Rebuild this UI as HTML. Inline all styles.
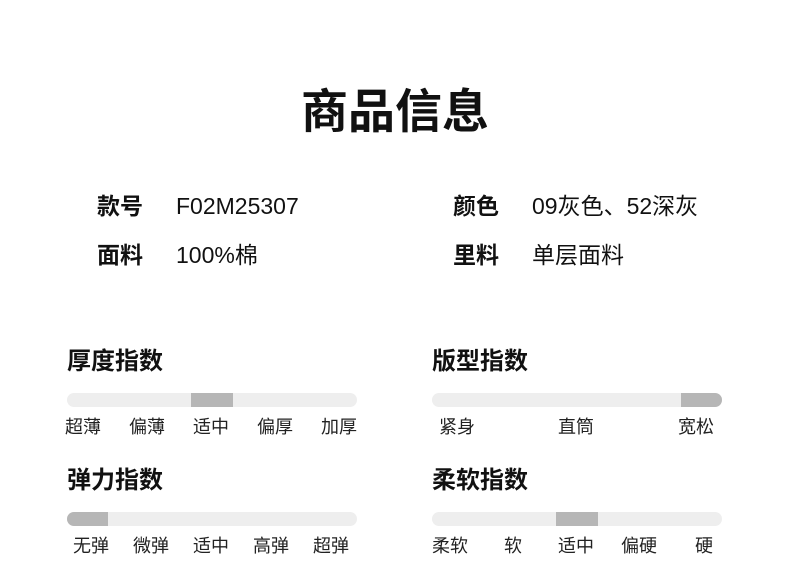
<!DOCTYPE html>
<html><head><meta charset="utf-8"><style>
body{margin:0;width:790px;height:562px;background:#fff;position:relative;overflow:hidden;font-family:"Liberation Sans","Noto Sans CJK SC",sans-serif;color:#111}
.a{position:absolute;white-space:nowrap;line-height:1}
.t{font-size:47px;font-weight:bold;left:0;width:790px;text-align:center;top:88px}
.k{font-size:23px;font-weight:bold}
.v{font-size:23px}
.h{font-size:24px;font-weight:bold}
.bar{position:absolute;height:14px;width:290px;background:#eeeeee;border-radius:7px;overflow:hidden}
.seg{position:absolute;top:0;height:14px;width:42px;background:#b6b6b6}
.l{font-size:18px;color:#222}
</style></head><body>
<div class="a t">商品信息</div>
<div class="a k" style="left:97px;top:195px">款号</div>
<div class="a v" style="left:176px;top:195px">F02M25307</div>
<div class="a k" style="left:453px;top:195px">颜色</div>
<div class="a v" style="left:532px;top:195px">09灰色、52深灰</div>
<div class="a k" style="left:97px;top:244px">面料</div>
<div class="a v" style="left:176px;top:244px">100%棉</div>
<div class="a k" style="left:453px;top:244px">里料</div>
<div class="a v" style="left:532px;top:244px">单层面料</div>

<div class="a h" style="left:67px;top:350px">厚度指数</div>
<div class="bar" style="left:67px;top:393px"><div class="seg" style="left:124px"></div></div>
<div class="a l" style="left:65px;top:418px">超薄</div>
<div class="a l" style="left:129px;top:418px">偏薄</div>
<div class="a l" style="left:193px;top:418px">适中</div>
<div class="a l" style="left:257px;top:418px">偏厚</div>
<div class="a l" style="left:321px;top:418px">加厚</div>

<div class="a h" style="left:432px;top:350px">版型指数</div>
<div class="bar" style="left:432px;top:393px"><div class="seg" style="left:249px"></div></div>
<div class="a l" style="left:439px;top:418px">紧身</div>
<div class="a l" style="left:558px;top:418px">直筒</div>
<div class="a l" style="left:678px;top:418px">宽松</div>

<div class="a h" style="left:67px;top:469px">弹力指数</div>
<div class="bar" style="left:67px;top:512px"><div class="seg" style="left:0px;width:41px"></div></div>
<div class="a l" style="left:73px;top:537px">无弹</div>
<div class="a l" style="left:133px;top:537px">微弹</div>
<div class="a l" style="left:193px;top:537px">适中</div>
<div class="a l" style="left:253px;top:537px">高弹</div>
<div class="a l" style="left:313px;top:537px">超弹</div>

<div class="a h" style="left:432px;top:469px">柔软指数</div>
<div class="bar" style="left:432px;top:512px"><div class="seg" style="left:124px"></div></div>
<div class="a l" style="left:432px;top:537px">柔软</div>
<div class="a l" style="left:504px;top:537px">软</div>
<div class="a l" style="left:558px;top:537px">适中</div>
<div class="a l" style="left:621px;top:537px">偏硬</div>
<div class="a l" style="left:695px;top:537px">硬</div>
</body></html>
